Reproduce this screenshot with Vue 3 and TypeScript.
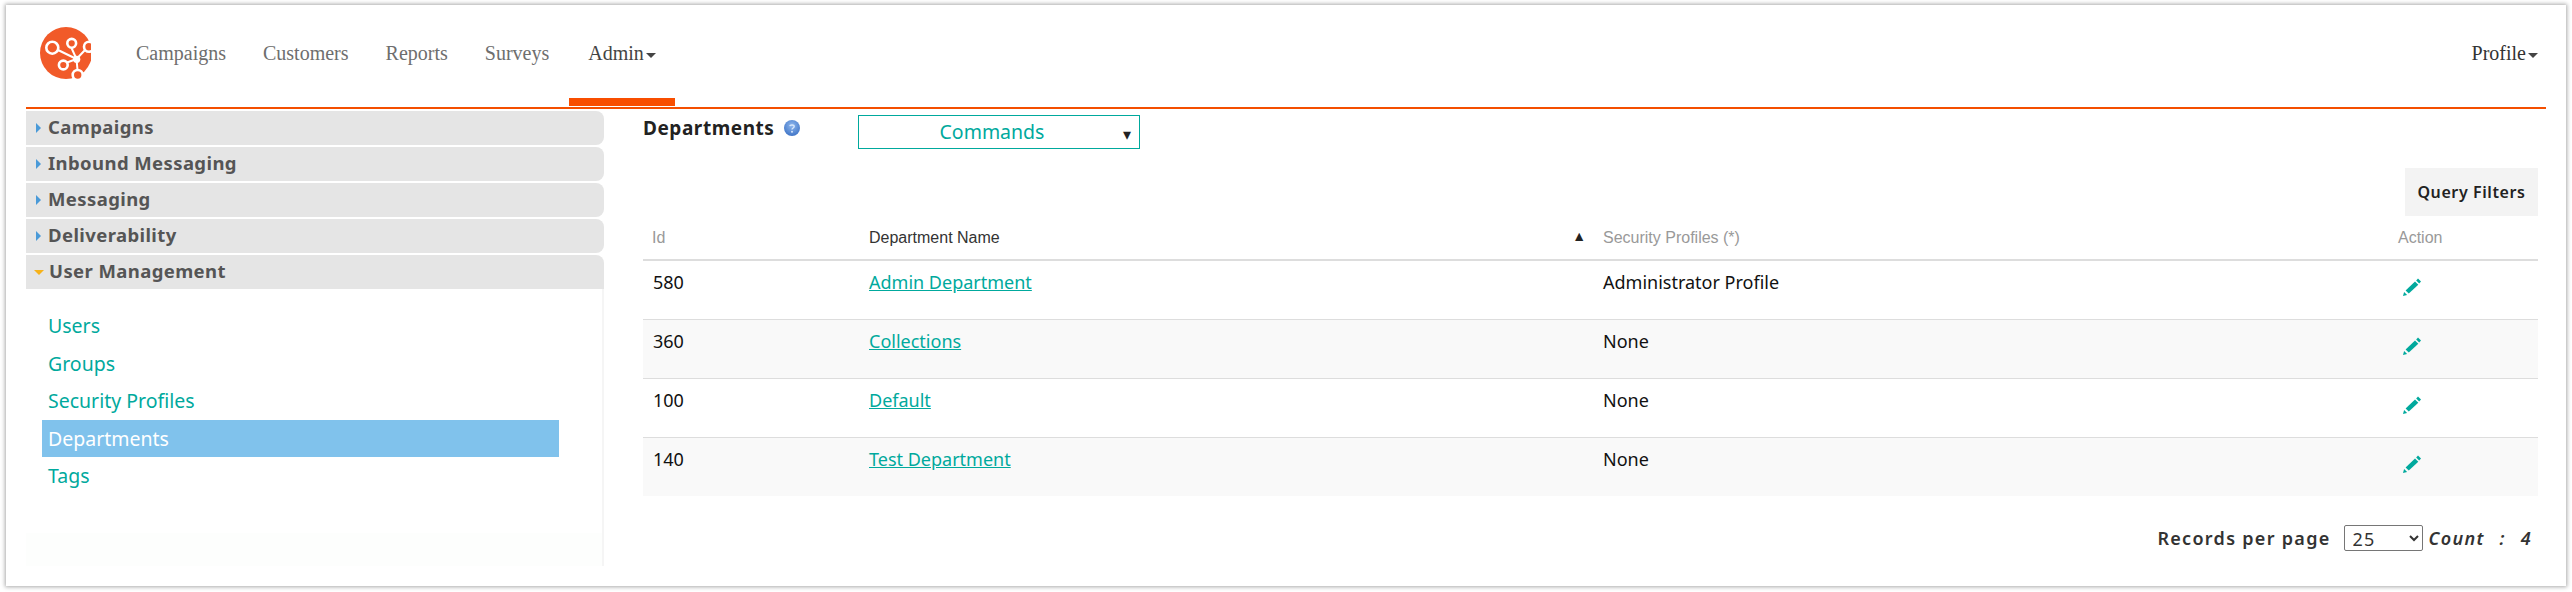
<script setup lang="ts">
interface Row { id: number; name: string; profile: string }

const navItems: string[] = ['Campaigns', 'Customers', 'Reports', 'Surveys']
const sections: string[] = ['Campaigns', 'Inbound Messaging', 'Messaging', 'Deliverability']
const links: string[] = ['Users', 'Groups', 'Security Profiles', 'Departments', 'Tags']
const rows: Row[] = [
  { id: 580, name: 'Admin Department', profile: 'Administrator Profile' },
  { id: 360, name: 'Collections', profile: 'None' },
  { id: 100, name: 'Default', profile: 'None' },
  { id: 140, name: 'Test Department', profile: 'None' },
]
</script>

<template>
  <div class="page">
    <div class="card">
      <header class="topbar">
        <svg class="logo" viewBox="0 0 52 52" aria-label="logo">
          <defs>
            <clipPath id="logoClip"><rect x="0" y="0" width="51" height="52" /></clipPath>
          </defs>
          <g clip-path="url(#logoClip)">
            <circle cx="26" cy="26" r="26" fill="#f15a29" />
            <g stroke="#fff" fill="none">
              <path d="M18 23 L36.5 32 M31.5 21 L36.5 32 M27 35.5 L36.5 32 M45 23 L36.5 32 M37.5 43 L36.5 32" stroke-width="2" />
              <circle cx="12.3" cy="20.7" r="6" stroke-width="2.6" fill="#f15a29" />
              <circle cx="31.7" cy="16.3" r="4.4" stroke-width="2.6" fill="#f15a29" />
              <circle cx="23.3" cy="38" r="4.4" stroke-width="2.6" fill="#f15a29" />
              <circle cx="49" cy="19.7" r="5" stroke-width="2.6" fill="#f15a29" />
              <circle cx="37.7" cy="48" r="5" stroke-width="2.6" fill="#f15a29" />
            </g>
            <circle cx="36.7" cy="32.3" r="3.6" fill="#fff" />
          </g>
        </svg>
        <nav class="nav">
          <a v-for="item in navItems" :key="item" class="nav-item">{{ item }}</a>
          <a class="nav-item active">Admin<i class="caret"></i></a>
        </nav>
        <a class="profile">Profile<i class="caret"></i></a>
      </header>

      <div class="body">
        <aside class="sidebar">
          <div v-for="s in sections" :key="s" class="section">
            <i class="tri-right"></i>{{ s }}
          </div>
          <div class="section open"><i class="tri-down"></i>User Management</div>
          <div class="panel">
            <ul class="links">
              <li v-for="l in links" :key="l" :class="{ current: l === 'Departments' }">{{ l }}</li>
            </ul>
            <div class="panel-foot"></div>
          </div>
        </aside>

        <main class="content">
          <div class="title-row">
            <h1 class="title">Departments</h1>
            <svg class="help" viewBox="0 0 16 16" aria-label="help">
              <defs>
                <radialGradient id="helpGrad" cx="50%" cy="35%" r="70%">
                  <stop offset="0" stop-color="#8fb8ee" />
                  <stop offset="1" stop-color="#3a70c4" />
                </radialGradient>
              </defs>
              <circle cx="8" cy="8" r="8" fill="url(#helpGrad)" />
              <path d="M5.8 6.2 C6 4.6 10.2 4.4 10.2 6.6 C10.2 8 8 8 8 9.6" fill="none" stroke="#d7e6fb" stroke-width="1.4" />
              <circle cx="8" cy="11.8" r="1" fill="#d7e6fb" />
            </svg>
            <div class="commands">
              <span>Commands</span>
              <i class="cmd-arrow">▾</i>
            </div>
          </div>

          <div class="filter-row">
            <button class="filters" type="button">Query Filters</button>
          </div>

          <table class="grid">
            <colgroup>
              <col class="c1" /><col class="c2" /><col class="c3" /><col class="c4" />
            </colgroup>
            <thead>
              <tr>
                <th>Id</th>
                <th class="sorted">Department Name<span class="sort">▲</span></th>
                <th>Security Profiles (*)</th>
                <th>Action</th>
              </tr>
            </thead>
            <tbody>
              <tr v-for="r in rows" :key="r.id">
                <td>{{ r.id }}</td>
                <td><a class="link">{{ r.name }}</a></td>
                <td>{{ r.profile }}</td>
                <td>
                  <svg class="pencil" viewBox="0 0 18 18" aria-label="edit">
                    <path d="M0 18 L1.1 14 L4.1 16.9 Z" />
                    <path d="M2.6 12.4 L12 3.6 L15.3 6.7 L5.8 15.5 Z" />
                    <path d="M13.2 2.6 L15 .6 L18 3.4 L16.2 5.4 Z" />
                  </svg>
                </td>
              </tr>
            </tbody>
          </table>

          <div class="pager">
            <span class="rpp">Records per page</span>
            <select class="size">
              <option>25</option>
            </select>
            <em class="count">Count &nbsp;: &nbsp;4</em>
          </div>
        </main>
      </div>
    </div>
  </div>
</template>

<style>
html, body { background: #fff; }
</style>

<style scoped>
.page {
  width: 2572px;
  height: 592px;
  box-sizing: border-box;
  padding: 5px 6px 6px;
  overflow: hidden;
  font-family: "Noto Sans", sans-serif;
}
.card {
  height: 581px;
  box-sizing: border-box;
  padding: 0 20px;
  background: #fff;
  box-shadow: 0 0 4px 1px #aaa;
}
.topbar {
  height: 104px;
  box-sizing: border-box;
  border-bottom: 2px solid #f44f00;
  display: flex;
  align-items: flex-start;
  padding: 22px 14px 0;
}
.logo { width: 52px; height: 52px; flex: none; }
.nav {
  display: flex;
  margin-left: 44px;
  height: 80px;
  font: 20px "Liberation Serif", serif;
}
.nav-item {
  color: #6e6e6e;
  margin-right: 37px;
  padding-top: 15px;
  white-space: nowrap;
}
.nav-item.active {
  color: #444;
  margin-left: -17px;
  margin-right: 0;
  padding: 3px 20px 0 19px;
  margin-top: 12px;
  box-sizing: border-box;
  border-bottom: 8px solid #f84e00;
  width: 106px;
  height: 67px;
}
.profile {
  margin-left: auto;
  margin-right: -6px;
  padding-top: 15px;
  color: #333;
  font: 20px "Liberation Serif", serif;
  white-space: nowrap;
}
.caret {
  display: inline-block;
  margin-left: 2px;
  vertical-align: middle;
  border-top: 5px solid #444;
  border-left: 5px solid transparent;
  border-right: 5px solid transparent;
}
.body { display: flex; }
.sidebar {
  width: 578px;
  flex: none;
  margin-top: 2px;
}
.section {
  height: 34px;
  box-sizing: border-box;
  margin-bottom: 2px;
  background: #e5e5e5;
  border-radius: 0 8px 8px 0;
  display: flex;
  align-items: center;
  padding: 0 0 3px 10px;
  color: #555;
  font: 700 18.5px "Noto Sans", sans-serif;
  letter-spacing: .4px;
}
.section.open { border-radius: 0 8px 0 0; margin-bottom: 0; }
.tri-right {
  width: 0; height: 0;
  margin: 3px 7px 0 0;
  border-left: 5px solid #4a9ad8;
  border-top: 5px solid transparent;
  border-bottom: 5px solid transparent;
}
.tri-down {
  width: 0; height: 0;
  margin: 3px 5px 0 -2px;
  border-top: 5px solid #f6b21a;
  border-left: 5px solid transparent;
  border-right: 5px solid transparent;
}
.panel {
  height: 277px;
  box-sizing: border-box;
  border-right: 2px solid #f5f5f5;
  padding-top: 18px;
  position: relative;
}
.links {
  list-style: none;
  margin: 0 0 0 16px;
  padding: 0;
  width: 517px;
  color: #00a99d;
  font-size: 19.5px;
}
.links li {
  height: 37.6px;
  line-height: 38.6px;
  padding-left: 6px;
}
.links li.current { background: #80c2ec; color: #fff; }
.panel-foot {
  margin-top: 38px;
  height: 33px;
  background: #fdfefd;
}
.content {
  width: 1895px;
  flex: none;
  margin-left: 39px;
}
.title-row {
  display: flex;
  align-items: flex-start;
  height: 59px;
  padding-top: 6px;
  box-sizing: border-box;
}
.title {
  margin: 0;
  width: 131px;
  color: #222;
  font: 700 19px "Noto Sans", sans-serif;
  letter-spacing: .55px;
  white-space: nowrap;
  line-height: 26px;
}
.help { width: 16px; height: 16px; margin: 5px 0 0 10px; flex: none; }
.commands {
  width: 282px;
  height: 34px;
  box-sizing: border-box;
  margin: 0 0 0 58px;
  border: 1px solid #00a99d;
  color: #00a99d;
  font-size: 19.5px;
  line-height: 31px;
  display: flex;
  justify-content: center;
  padding-right: 14px;
  position: relative;
}
.cmd-arrow {
  position: absolute;
  right: 8px;
  top: 3px;
  color: #222;
  font-style: normal;
  font-size: 16px;
}
.filter-row { display: flex; justify-content: flex-end; }
.filters {
  width: 133px;
  height: 48px;
  border: 0;
  background: #f3f3f3;
  color: #222;
  font: 600 16px "Noto Sans", sans-serif;
  letter-spacing: .6px;
}
.grid {
  width: 1895px;
  table-layout: fixed;
  border-collapse: collapse;
}
.c1 { width: 217px; }
.c2 { width: 733px; }
.c3 { width: 796px; }
.c4 { width: 149px; }
.grid th {
  height: 43px;
  padding: 0 9px;
  text-align: left;
  color: #999;
  font: 16px "Liberation Sans", sans-serif;
  border-bottom: 2px solid #ddd;
}
.grid th:nth-child(3) { padding-left: 10px; }
.grid th.sorted { color: #333; position: relative; }
.sort {
  position: absolute;
  right: 7px;
  top: 12px;
  color: #222;
  font-size: 14px;
}
.grid td {
  height: 59px;
  padding: 7px 9px 0;
  box-sizing: border-box;
  vertical-align: top;
  color: #111;
  font-size: 18px;
  line-height: 28px;
  border-top: 1px solid #ddd;
}
.grid td:first-child { padding-left: 10px; }
.grid td:nth-child(3) { padding-left: 10px; }
.grid tbody tr:first-child td { border-top: 0; }
.grid tbody tr:nth-child(even) td { background: #f9f9f9; }
.link { color: #00a99d; text-decoration: underline; }
.pencil { width: 18px; height: 18px; fill: #00a99d; display: block; margin: 10px 0 0 5px; }
.pager {
  display: flex;
  justify-content: flex-end;
  align-items: center;
  height: 26px;
  margin-top: 29px;
  padding-right: 6px;
  color: #333;
  font: 600 18px "Noto Sans", sans-serif;
  letter-spacing: 1.3px;
}
.rpp { margin-right: 13px; }
.size {
  width: 79px;
  height: 26px;
  margin-right: 6px;
  padding: 0 0 0 4px;
  background: #fff;
  color: #333;
  border: 1px solid #767676;
  border-radius: 2px;
  font: 18px "Noto Sans", sans-serif;
  letter-spacing: 1px;
}
.count { font-weight: 600; word-spacing: 1.5px; }
</style>
